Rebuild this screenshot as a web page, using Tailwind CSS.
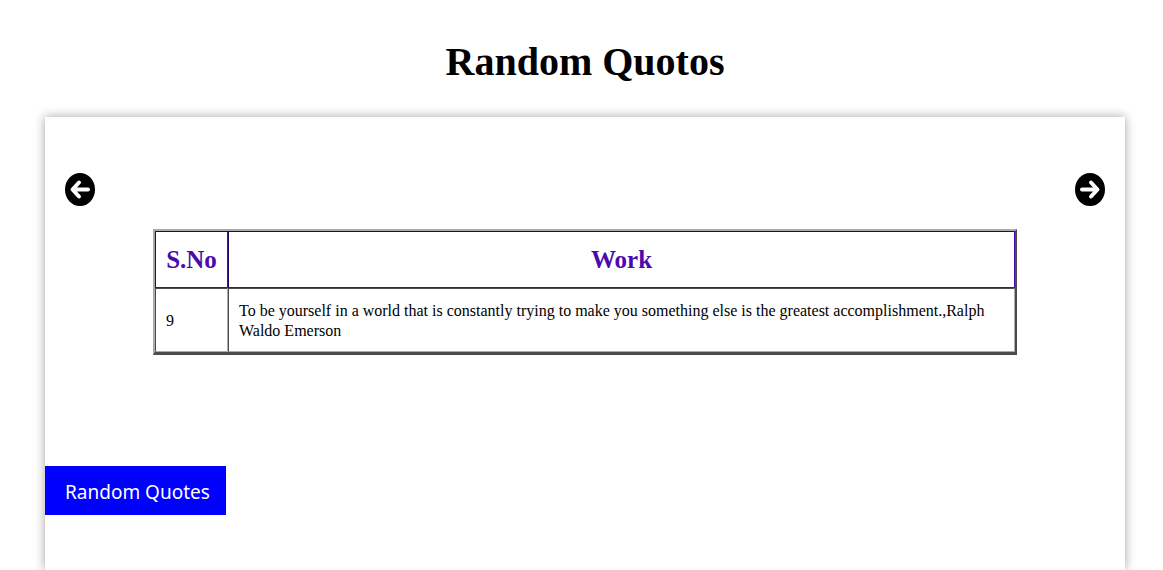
<!DOCTYPE html>
<html lang="en">
<head>
<meta charset="utf-8">
<title>Random Quotos</title>
<script src="https://cdn.jsdelivr.net/npm/@tailwindcss/browser@4"></script>
</head>
<body class="bg-white text-black font-['Liberation_Serif','Times_New_Roman',serif]">
<main class="ml-[45px] mr-[38px] pt-[37px] min-h-screen flex flex-col">
  <h1 class="text-center text-[40px] leading-[50px] font-bold">Random Quotos</h1>
  <section class="mt-[30px] grow pt-[55px] shadow-[0_0_10px_#a8a0a0]">
    <div class="flex justify-between px-5">
      <button type="button" aria-label="Previous quote">
        <svg class="block w-[30px] h-[34px]" viewBox="0 0 30 34"><ellipse cx="15" cy="17.5" rx="15" ry="16.5"/><path d="M14 10.5L7.5 17.5L14 24.5M8 17.5H23" fill="none" stroke="#fff" stroke-width="4" stroke-linecap="round" stroke-linejoin="round"/></svg>
      </button>
      <button type="button" aria-label="Next quote">
        <svg class="block w-[30px] h-[34px]" viewBox="0 0 30 34"><ellipse cx="15" cy="17.5" rx="15" ry="16.5"/><path d="M16 10.5L22.5 17.5L16 24.5M22 17.5H7" fill="none" stroke="#fff" stroke-width="4" stroke-linecap="round" stroke-linejoin="round"/></svg>
      </button>
    </div>
    <table class="mt-[23px] mx-auto w-4/5 border-separate border-spacing-0 border-2 border-b-3 border-t-[#aaa] border-l-[#aaa] border-r-[#4c4c4c] border-b-[#4c4c4c]">
      <thead>
        <tr class="text-[25px] leading-[35px] text-[#4b0aae]">
          <th class="w-[73px] px-[10px] py-[10px] border border-t-[#25056b] border-l-[#25056b] border-r-[#4b0aae] border-b-[#4b0aae]">S.No</th>
          <th class="px-[10px] py-[10px] border border-t-[#25056b] border-l-[#25056b] border-r-[#4b0aae] border-b-[#4b0aae]">Work</th>
        </tr>
      </thead>
      <tbody>
        <tr class="text-base leading-5">
          <td class="px-[10px] pt-3 pb-[10px] border border-t-[#4c4c4c] border-l-[#4c4c4c] border-r-[#aaa] border-b-[#aaa]">9</td>
          <td class="px-[10px] pt-3 pb-[10px] border border-t-[#4c4c4c] border-l-[#4c4c4c] border-r-[#aaa] border-b-[#aaa]">To be yourself in a world that is constantly trying to make you something else is the greatest accomplishment.,Ralph Waldo Emerson</td>
        </tr>
      </tbody>
    </table>
    <button type="button" class="mt-[111px] block pl-5 pr-4 pt-[2px] h-[49px] bg-[#0000ff] text-white text-[19px] leading-6 font-['Noto_Sans','Open_Sans',sans-serif]">Random Quotes</button>
  </section>
</main>
</body>
</html>
